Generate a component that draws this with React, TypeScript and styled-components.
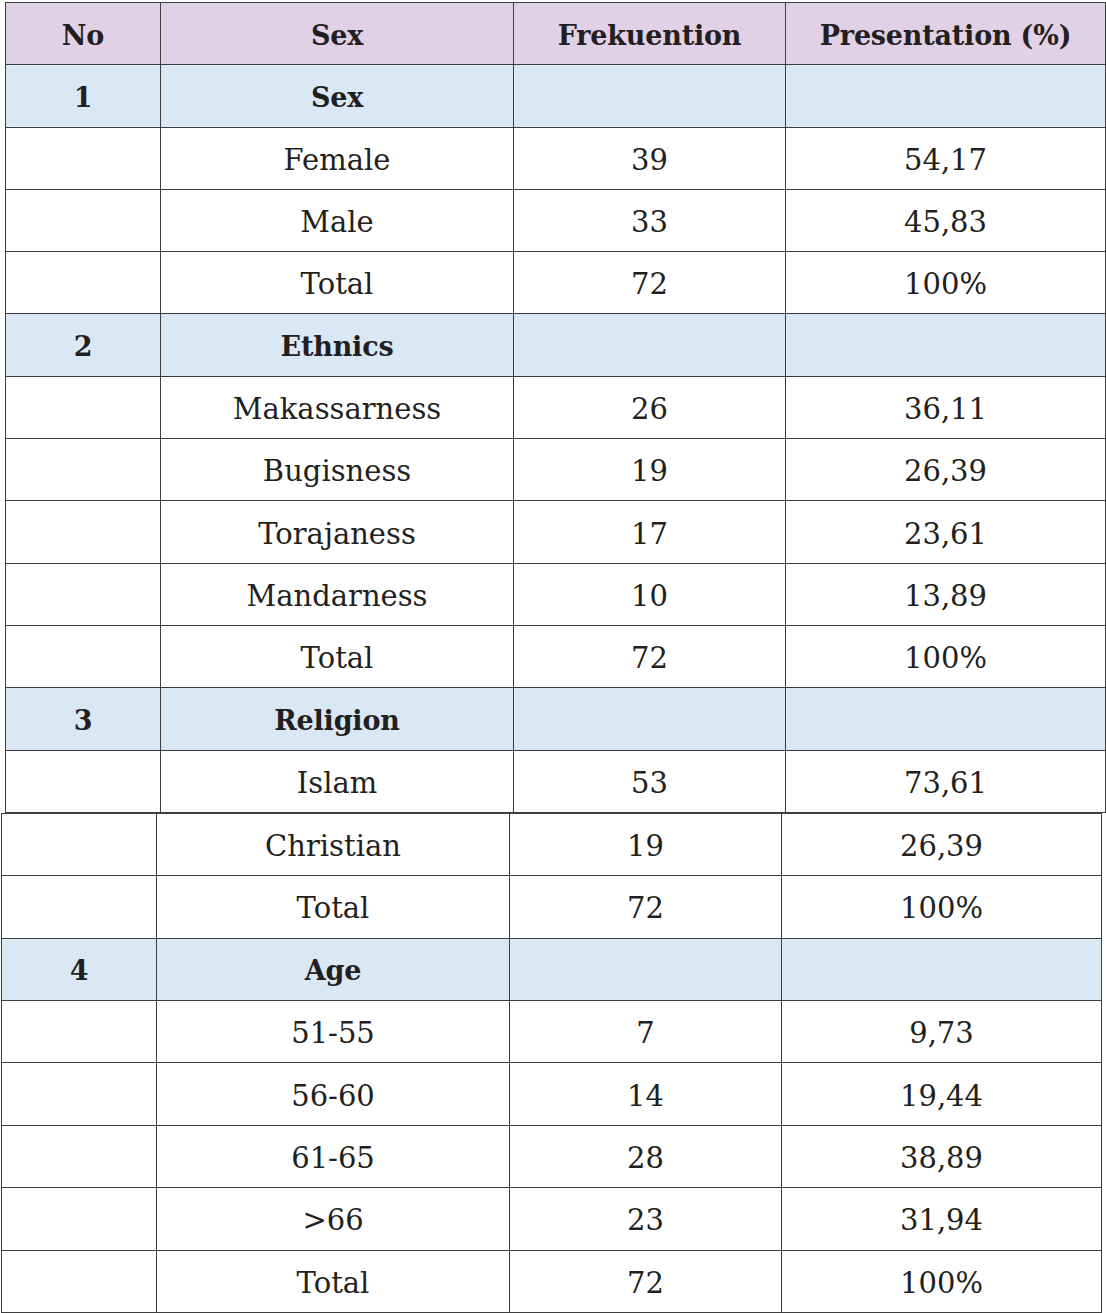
import React from "react";
import styled, { createGlobalStyle } from "styled-components";

const GlobalStyle = createGlobalStyle`
  body {
    margin: 0;
    background: #ffffff;
    font-family: "DejaVu Serif", "Liberation Serif", serif;
    color: #231f20;
  }
`;

type Kind = "head" | "section" | "plain";

type Row = { kind: Kind; cells: string[] };

const topRows: Row[] = [
  { kind: "head", cells: ["No", "Sex", "Frekuention", "Presentation (%)"] },
  { kind: "section", cells: ["1", "Sex", "", ""] },
  { kind: "plain", cells: ["", "Female", "39", "54,17"] },
  { kind: "plain", cells: ["", "Male", "33", "45,83"] },
  { kind: "plain", cells: ["", "Total", "72", "100%"] },
  { kind: "section", cells: ["2", "Ethnics", "", ""] },
  { kind: "plain", cells: ["", "Makassarness", "26", "36,11"] },
  { kind: "plain", cells: ["", "Bugisness", "19", "26,39"] },
  { kind: "plain", cells: ["", "Torajaness", "17", "23,61"] },
  { kind: "plain", cells: ["", "Mandarness", "10", "13,89"] },
  { kind: "plain", cells: ["", "Total", "72", "100%"] },
  { kind: "section", cells: ["3", "Religion", "", ""] },
  { kind: "plain", cells: ["", "Islam", "53", "73,61"] },
];

const bottomRows: Row[] = [
  { kind: "plain", cells: ["", "Christian", "19", "26,39"] },
  { kind: "plain", cells: ["", "Total", "72", "100%"] },
  { kind: "section", cells: ["4", "Age", "", ""] },
  { kind: "plain", cells: ["", "51-55", "7", "9,73"] },
  { kind: "plain", cells: ["", "56-60", "14", "19,44"] },
  { kind: "plain", cells: ["", "61-65", "28", "38,89"] },
  { kind: "plain", cells: ["", ">66", "23", "31,94"] },
  { kind: "plain", cells: ["", "Total", "72", "100%"] },
];

const Page = styled.div`
  padding-top: 2px;
  width: 1106px;
`;

const Table = styled.table<{ $shift: number; $rowH: number }>`
  margin-left: ${(p) => p.$shift}px;
  width: 1100px;
  border-collapse: collapse;
  table-layout: fixed;

  tr {
    height: ${(p) => p.$rowH}px;
  }
`;

const Cell = styled.td<{ $kind: Kind }>`
  border: 1px solid #3e3e3e;
  padding: 3px 0 0;
  text-align: center;
  vertical-align: middle;
  font-size: ${(p) => (p.$kind === "plain" ? "29px" : "27px")};
  font-weight: ${(p) => (p.$kind === "plain" ? 400 : 700)};
  letter-spacing: ${(p) => (p.$kind === "plain" ? "0" : "-0.2px")};
  background: ${(p) =>
    p.$kind === "head" ? "#e0d1e7" : p.$kind === "section" ? "#dae8f6" : "#ffffff"};
  white-space: nowrap;
`;

const widths = [155, 353, 272, 320];

const Block: React.FC<{ rows: Row[]; shift: number; rowH: number }> = ({ rows, shift, rowH }) => (
  <Table $shift={shift} $rowH={rowH}>
    <colgroup>
      {widths.map((w, i) => (
        <col key={i} style={{ width: w }} />
      ))}
    </colgroup>
    <tbody>
      {rows.map((r, i) => (
        <tr key={i}>
          {r.cells.map((c, j) => (
            <Cell key={j} $kind={r.kind}>
              {c}
            </Cell>
          ))}
        </tr>
      ))}
    </tbody>
  </Table>
);

export default function App() {
  return (
    <Page>
      <GlobalStyle />
      <Block rows={topRows} shift={5} rowH={62.3} />
      <Block rows={bottomRows} shift={1} rowH={62.4} />
    </Page>
  );
}
